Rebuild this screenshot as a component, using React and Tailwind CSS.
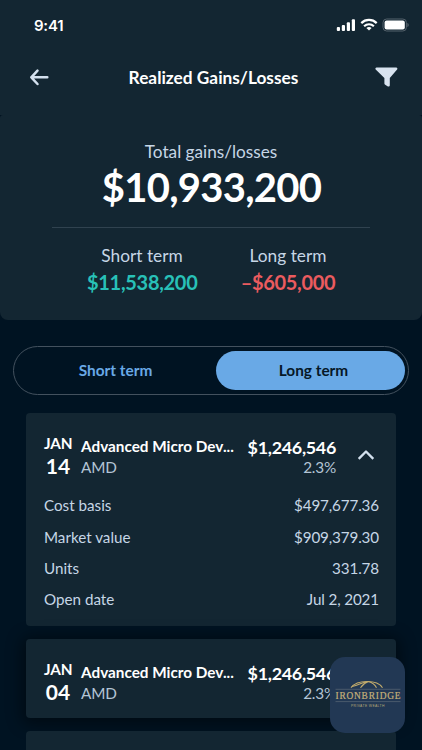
import { useState } from 'react';

const holdings = [
  {
    id: 1,
    month: 'JAN',
    day: '14',
    name: 'Advanced Micro Dev...',
    ticker: 'AMD',
    amount: '$1,246,546',
    percent: '2.3%',
    details: [
      { label: 'Cost basis', value: '$497,677.36' },
      { label: 'Market value', value: '$909,379.30' },
      { label: 'Units', value: '331.78' },
      { label: 'Open date', value: 'Jul 2, 2021' },
    ],
  },
  {
    id: 2,
    month: 'JAN',
    day: '04',
    name: 'Advanced Micro Dev...',
    ticker: 'AMD',
    amount: '$1,246,546',
    percent: '2.3%',
  },
];

function StatusBar() {
  return (
    <div className="flex h-[50px] items-center justify-between pl-[34px] pr-[13px]">
      <span className="mt-px font-['Inter'] text-[15px] font-semibold leading-5 tracking-[-0.25px] text-white">9:41</span>
      <div className="flex items-center">
        <svg width="20" height="14" viewBox="0 0 20 14" fill="white">
          <rect x="0.8" y="9" width="3.2" height="4" rx="1" />
          <rect x="5.8" y="7" width="3.2" height="6" rx="1" />
          <rect x="10.8" y="4.3" width="3.2" height="8.7" rx="1" />
          <rect x="15.8" y="1.2" width="3.2" height="11.8" rx="1" />
        </svg>
        <svg className="ml-1" width="18" height="14" viewBox="0 0 18 14" fill="none" stroke="white" strokeWidth="2.2">
          <path d="M1.3 5.1C5.6.9 12.4.9 16.7 5.1" />
          <path d="M4.1 8.2c2.8-2.6 7-2.6 9.8 0" />
          <path d="M9 12.6 6.4 10c1.5-1.3 3.7-1.3 5.2 0z" fill="white" stroke="none" />
        </svg>
        <svg className="ml-1" width="27" height="14" viewBox="0 0 27 14">
          <rect x="1" y="1" width="23.4" height="12" rx="3.6" fill="none" stroke="#55626c" />
          <rect x="2.6" y="2.6" width="20.2" height="8.8" rx="2" fill="white" />
          <path d="M25.4 5v4c.8-.3 1.3-1.1 1.3-2s-.5-1.7-1.3-2z" fill="#55626c" />
        </svg>
      </div>
    </div>
  );
}

function Header() {
  return (
    <div className="flex h-[65px] items-start justify-between pl-[29px] pr-[24px] pt-[15px]">
      <button className="flex h-6 w-6 items-center">
        <svg width="20" height="18" viewBox="0 0 20 18" fill="none" stroke="#d3e0ee" strokeWidth="2.5" strokeLinecap="round" strokeLinejoin="round">
          <path d="M18.3 9.3H2.3M8.5 2.6 2.3 9.3l6.2 6.7" />
        </svg>
      </button>
      <h1 className="mt-px text-[17.3px] font-bold leading-6 text-white">Realized Gains/Losses</h1>
      <button className="flex h-6 w-6 items-center justify-center">
        <svg width="24" height="22" viewBox="0 0 24 22" fill="#d8e3ef">
          <path d="M2.6 1.4h19.6c1.1 0 1.6 1.3.9 2.1L15.8 12v7.3c0 1-1 1.6-1.9 1.1l-2.7-1.6c-.5-.3-.8-.8-.8-1.4V12L1.7 3.5c-.7-.8-.2-2.1.9-2.1z" />
        </svg>
      </button>
    </div>
  );
}

function Summary() {
  return (
    <div className="h-[205px] rounded-b-lg rounded-t-[3px] bg-[#132632] pt-[25px] text-center">
      <p className="text-[17.2px] leading-6 text-[#c6d6e6]">Total gains/losses</p>
      <p className="pl-px text-[40px] font-bold leading-[46px] tracking-[-0.75px] text-white">$10,933,200</p>
      <div className="mx-[52px] mt-[17px] h-px bg-[#30424f]" />
      <div className="flex justify-center gap-9 pl-2 pt-4">
        <div className="w-[110px] whitespace-nowrap">
          <p className="text-[17.3px] leading-6 text-[#c6d6e6]">Short term</p>
          <p className="text-[20px] font-bold leading-7 tracking-[-0.3px] text-[#28c1b8]">$11,538,200</p>
        </div>
        <div className="w-[110px] whitespace-nowrap">
          <p className="text-[17.3px] leading-6 text-[#c6d6e6]">Long term</p>
          <p className="text-[20px] font-bold leading-7 tracking-[-0.35px] text-[#ea5b5f]">–$605,000</p>
        </div>
      </div>
    </div>
  );
}

function TermToggle({ term, onChange }) {
  const active = 'bg-[#69a9e6] text-[#061827]';
  const inactive = 'text-[#69a9e6]';
  return (
    <div className="mx-[13px] mt-[26px] flex h-[49px] rounded-full border border-[#43515e] px-[3px] py-1">
      <button
        onClick={() => onChange('short')}
        className={`mr-[3px] w-[196px] rounded-full pl-px text-[15.4px] font-bold ${term === 'short' ? active : inactive}`}
      >
        Short term
      </button>
      <button
        onClick={() => onChange('long')}
        className={`flex-1 rounded-full pl-[6px] text-[15.4px] font-bold ${term === 'long' ? active : inactive}`}
      >
        Long term
      </button>
    </div>
  );
}

function HoldingCard({ holding }) {
  const { details } = holding;
  return (
    <div
      className={`rounded bg-[#132632] pl-[18px] pr-[17px] ${
        details ? 'h-[213px]' : 'h-[79px] shadow-[0_2px_16px_4px_rgba(0,0,0,0.45)]'
      }`}
    >
      <div className="flex pt-[18px]">
        <div className="w-[28px] text-center text-white">
          <p className="text-[15.3px] font-bold leading-6 tracking-[-0.1px]">{holding.month}</p>
          <p className="text-[21px] font-bold leading-[22px]">{holding.day}</p>
        </div>
        <div className="ml-[9px] pt-1">
          <p className="text-[15.3px] font-bold leading-[22px] text-white">{holding.name}</p>
          <p className="text-[15.3px] leading-[21px] tracking-[-0.2px] text-[#b3c4d5]">{holding.ticker}</p>
        </div>
        <div className="ml-auto pt-[5px] text-right">
          <p className="text-[17.9px] font-bold leading-[22px] tracking-[-0.3px] text-white">{holding.amount}</p>
          <p className="mt-px text-[15.3px] leading-[17px] tracking-[-0.2px] text-[#b3c4d5]">{holding.percent}</p>
        </div>
        <svg className="ml-[21px] mr-[4px] mt-[17px]" width="18" height="14" viewBox="0 0 18 14" fill="none" stroke="#d3e0ee" strokeWidth="2.3" strokeLinejoin="round">
          <path d="m1.7 10.9 7.3-7.4 7.3 7.4" />
        </svg>
      </div>
      {details && (
        <dl className="mt-[12px]">
          {details.map((row) => (
            <div key={row.label} className="flex h-[31.3px] items-center justify-between text-[15.2px] text-[#c6d6e6]">
              <dt>{row.label}</dt>
              <dd className="tracking-[-0.12px]">{row.value}</dd>
            </div>
          ))}
        </dl>
      )}
    </div>
  );
}

function BrandBadge() {
  return (
    <div className="absolute left-[329.5px] top-[657px] h-[76px] w-[75.5px] rounded-[15px] bg-[#223854]">
      <svg width="75.5" height="76" viewBox="0 0 75.5 76" fill="none">
        <g stroke="#c2ab6c" strokeWidth="1.1">
          <path d="M21 30.7c3-4 9-6.2 16-6.2s13 2.2 15.5 6.2" />
          <path d="M22 29.5c7-1 10-4.5 16-5M30.5 30.7c2-3 4.5-5 8-6.2 4 1.2 6.5 3.2 8 6.2" />
        </g>
        <path d="M5.5 32.3h65M5.5 44.6h65" stroke="#65707a" strokeWidth=".6" />
        <text x="5.5" y="42" textLength="65" fontFamily="Liberation Serif, serif" fontSize="9.4" fill="#c4b079" stroke="#c4b079" strokeWidth=".2">IRONBRIDGE</text>
        <text x="21" y="50.3" textLength="33.5" fontFamily="Liberation Sans, sans-serif" fontSize="3.4" fill="#b8a878">PRIVATE WEALTH</text>
      </svg>
    </div>
  );
}

export default function App() {
  const [term, setTerm] = useState('long');

  return (
    <div className="relative h-[750px] w-[422px] overflow-hidden bg-[#001322] font-['Lato',sans-serif]">
      <div className="bg-[#132632]">
        <StatusBar />
        <Header />
      </div>
      <Summary />
      <TermToggle term={term} onChange={setTerm} />
      <div className="mx-[26px] mt-[18px] flex flex-col gap-[13px]">
        {holdings.map((holding) => (
          <HoldingCard key={holding.id} holding={holding} />
        ))}
        <div className="h-[79px] rounded bg-[#132632]" />
      </div>
      <BrandBadge />
    </div>
  );
}
